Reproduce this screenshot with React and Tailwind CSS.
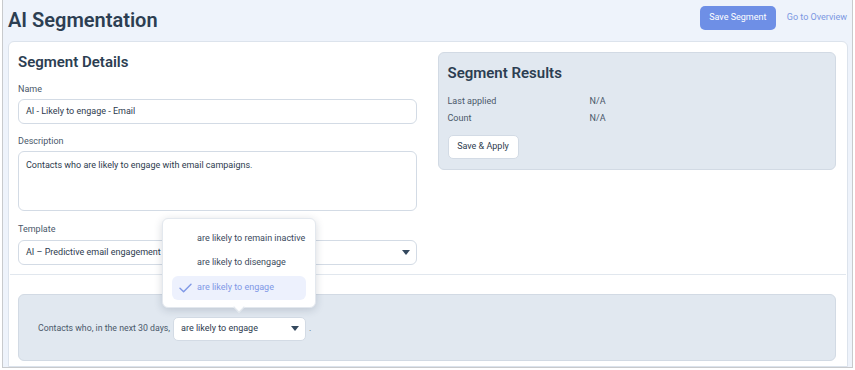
import { useState } from "react";

const options = [
  "are likely to remain inactive",
  "are likely to disengage",
  "are likely to engage",
];

function Caret() {
  return (
    <svg width="8" height="5" viewBox="0 0 8 5" className="shrink-0">
      <path d="M0 0 L8 0 L4 5 Z" fill="#34495e" />
    </svg>
  );
}

function Check() {
  return (
    <svg width="13" height="10" viewBox="0 0 13 10" fill="none">
      <path d="M1 5.2 L4.6 8.8 L12 1.2" stroke="#7f98e6" strokeWidth="1.4" strokeLinecap="round" strokeLinejoin="round" />
    </svg>
  );
}

export default function App() {
  const [choice] = useState(2);

  return (
    <div className="w-[855px] h-[370px] bg-white overflow-hidden font-['Roboto',sans-serif] text-[#2d3b4e]">
      <div className="ml-[2px] w-[851px] h-[368px] bg-[#eef3fb] border-l border-r border-b border-[#c8cacd] flex flex-col overflow-hidden">
        {/* header */}
        <div className="h-[39px] shrink-0 flex items-center justify-between pl-[5px] pr-[5px]">
          <div className="text-[20px] font-semibold text-[#2c3e52]">AI Segmentation</div>
          <div className="flex items-center gap-[11px] -mt-[4px]">
            <button className="h-[24px] w-[76px] rounded-[5px] bg-[#6e8fe6] text-white text-[9px]">
              Save Segment
            </button>
            <span className="text-[9px] text-[#7b97e2]">Go to Overview</span>
          </div>
        </div>

        {/* card */}
        <div className="mt-[2px] ml-[5px] mr-[4px] flex-1 bg-white border border-[#dce3ec] rounded-t-[6px]">
          <div className="pl-[9px] pr-[11px] pt-[10px] grid grid-cols-2 gap-[21px]">
            {/* left */}
            <div>
              <div className="h-[20px] flex items-center text-[15px] font-semibold text-[#2c3e52]">Segment Details</div>
              <div className="mt-[11px] h-[14px] flex items-center text-[9px] text-[#4a586a]">Name</div>
              <div className="mt-[2px] h-[25px] rounded-[6px] border border-[#d3dbe5] flex items-center px-[7px] text-[9px] text-[#2d3b4e]">
                AI - Likely to engage - Email
              </div>
              <div className="mt-[11px] h-[14px] flex items-center text-[9px] text-[#4a586a]">Description</div>
              <div className="mt-[2px] h-[60px] rounded-[6px] border border-[#d3dbe5] px-[7px] pt-[7px] text-[9px] text-[#2d3b4e]">
                Contacts who are likely to engage with email campaigns.
              </div>
              <div className="mt-[12px] h-[14px] flex items-center text-[9px] text-[#4a586a]">Template</div>
              <div className="mt-[3px] h-[25px] rounded-[6px] border border-[#d3dbe5] flex items-center justify-between pl-[7px] pr-[6px] text-[9px] text-[#2d3b4e]">
                <span>AI – Predictive email engagement</span>
                <Caret />
              </div>
            </div>

            {/* right */}
            <div className="self-start h-[118px] rounded-[6px] bg-[#e1e8f0] border border-[#d2dae4] pl-[9px] pt-[10px]">
              <div className="h-[20px] flex items-center text-[15px] font-semibold text-[#2c3e52]">Segment Results</div>
              <div className="mt-[12px] flex flex-col gap-[4px] text-[9px] text-[#4a586a]">
                <div className="flex h-[13px] items-center">
                  <span className="w-[142px]">Last applied</span>
                  <span>N/A</span>
                </div>
                <div className="flex h-[13px] items-center">
                  <span className="w-[142px]">Count</span>
                  <span>N/A</span>
                </div>
              </div>
              <button className="mt-[10px] h-[24px] w-[71px] rounded-[5px] bg-white border border-[#d3dbe5] text-[9px] text-[#2d3b4e]">
                Save &amp; Apply
              </button>
            </div>
          </div>

          <div className="mt-[9px] mx-[1px] h-px bg-[#e1e7ee]" />

          <div className="mt-[19px] ml-[9px] mr-[11px] h-[67px] rounded-[6px] bg-[#e1e8f0] border border-[#d2dae4] flex items-center pl-[19px] pt-[2px] text-[8.75px] text-[#4a586a]">
            <span>Contacts who, in the next 30 days,</span>
            <div className="relative ml-[3px]">
              <div className="h-[24px] w-[133px] rounded-[5px] bg-white border border-[#d3dbe5] flex items-center justify-between pl-[7px] pr-[6px] text-[9px] text-[#2d3b4e]">
                <span>{options[choice]}</span>
                <Caret />
              </div>
              {/* open menu */}
              <div className="absolute left-[-11px] bottom-[33px] w-[154px] bg-white rounded-[6px] border border-[#e3e8ee] shadow-[0_2px_8px_rgba(30,45,70,0.18)] px-[9px] pt-[8px] pb-[7px] text-[9px]">
                {options.map((o, i) => (
                  <div
                    key={o}
                    className={
                      i === choice
                        ? "h-[24px] mt-[1px] rounded-[6px] bg-[#edf1fd] flex items-center text-[#7f98e6]"
                        : "h-[24px] flex items-center text-[#3b4a5c]"
                    }
                  >
                    <span className="w-[25px] flex justify-center pl-[1px]">{i === choice ? <Check /> : null}</span>
                    <span>{o}</span>
                  </div>
                ))}
                <div className="absolute left-[72px] -bottom-[4px] w-[8px] h-[8px] bg-white rotate-45 border-r border-b border-[#e3e8ee]" />
              </div>
            </div>
            <span className="ml-[3px]">.</span>
          </div>
        </div>
      </div>
    </div>
  );
}
